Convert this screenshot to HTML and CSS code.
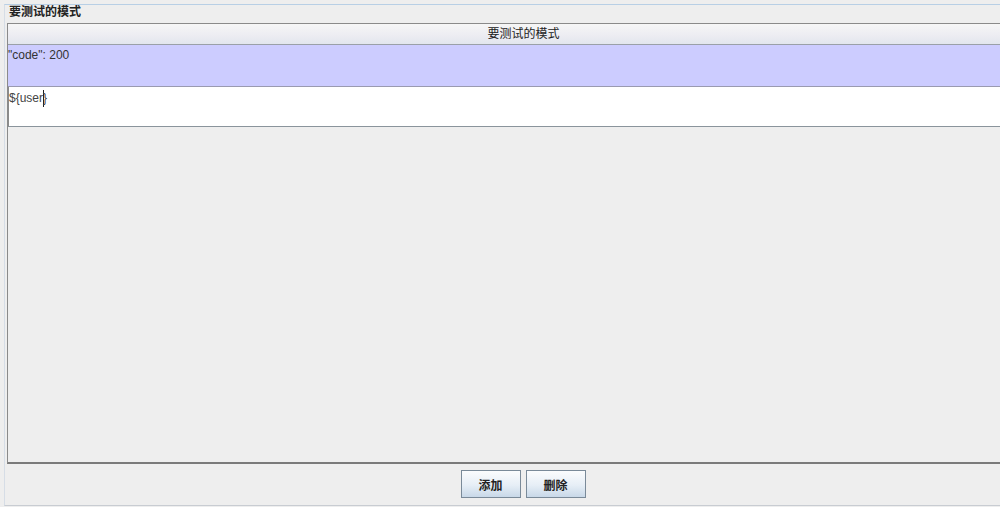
FILE: index.html
```html
<!DOCTYPE html>
<html lang="zh-CN">
<head>
  <meta charset="UTF-8">
  <title>要测试的模式</title>
  <link rel="stylesheet" href="styles.css">
</head>
<body>
  <div class="group">
    <div class="legend">要测试的模式</div>
    <div class="table-box">
      <div class="table-head">要测试的模式</div>
      <div class="row selected">"code": 200</div>
      <div class="row editing">${user<span class="caret"></span>}</div>
      <div class="table-fill"></div>
    </div>
    <div class="buttons">
      <button class="btn">添加</button>
      <button class="btn">删除</button>
    </div>
  </div>
</body>
</html>
```

FILE: styles.css
```css
body {
  margin: 0;
  padding: 0;
  background-color: #eeeeee;
  font-family: "Liberation Sans", Arial, "Noto Sans CJK SC", sans-serif;
  font-size: 12px;
  color: #333;
  overflow: hidden;
  height: 507px;
}
.group {
  position: relative;
  margin: 4px 0 0 4px;
  height: 502px;
  border-top: 1px solid #b8cfe5;
  border-left: 1px solid #d6dde6;
  border-bottom: 1px solid #c8ccd2;
  display: flex;
  flex-direction: column;
  padding: 18px 0 0 2px;
  box-sizing: border-box;
}
.legend {
  position: absolute;
  top: 0;
  left: 2px;
  padding: 0 2px;
  background-color: #eeeeee;
  font-weight: bold;
  color: #222;
  line-height: 15px;
}
.table-box {
  width: 1032px;
  height: 441px;
  border-top: 1px solid #8a8a8a;
  border-left: 1px solid #8a8a8a;
  border-bottom: 2px solid #7a7a7a;
  display: flex;
  flex-direction: column;
  box-sizing: border-box;
}
.table-head {
  height: 20px;
  line-height: 21px;
  text-align: center;
  color: #222;
  background: linear-gradient(#f6f6f6, #ececf2 60%, #e2e6ee);
  border-bottom: 1px solid #9aa0a8;
}
.row {
  padding: 3px 0 0 0;
  line-height: 14px;
  box-sizing: border-box;
}
.selected {
  height: 42px;
  background-color: #ccccff;
  color: #333;
  border-bottom: 1px solid #9a9ab0;
}
.editing {
  height: 40px;
  background-color: #fff;
  border-left: 1px solid #8a8a8a;
  border-bottom: 1px solid #8a949c;
  box-shadow: 0 1px 0 #eef0f2, 0 2px 0 #8a949c;
  padding-top: 3px;
  color: #444;
}
.caret {
  display: inline-block;
  width: 1px;
  height: 17px;
  background-color: #222;
  vertical-align: -5px;
  margin-right: -1px;
}
.table-fill {
  flex: 1;
  border-top: 2px solid #eeeeee;
}
.buttons {
  width: 1032px;
  display: flex;
  justify-content: center;
  gap: 5px;
  padding: 6px 0 0 0;
}
.btn {
  width: 60px;
  height: 28px;
  padding: 0;
  font-family: "Liberation Sans", Arial, "Noto Sans CJK SC", sans-serif;
  font-size: 12px;
  font-weight: bold;
  color: #222;
  border: 1px solid #7a8a99;
  border-radius: 0;
  background: linear-gradient(#fbfcfd, #e6eef6 55%, #c8d8e8);
}
```
